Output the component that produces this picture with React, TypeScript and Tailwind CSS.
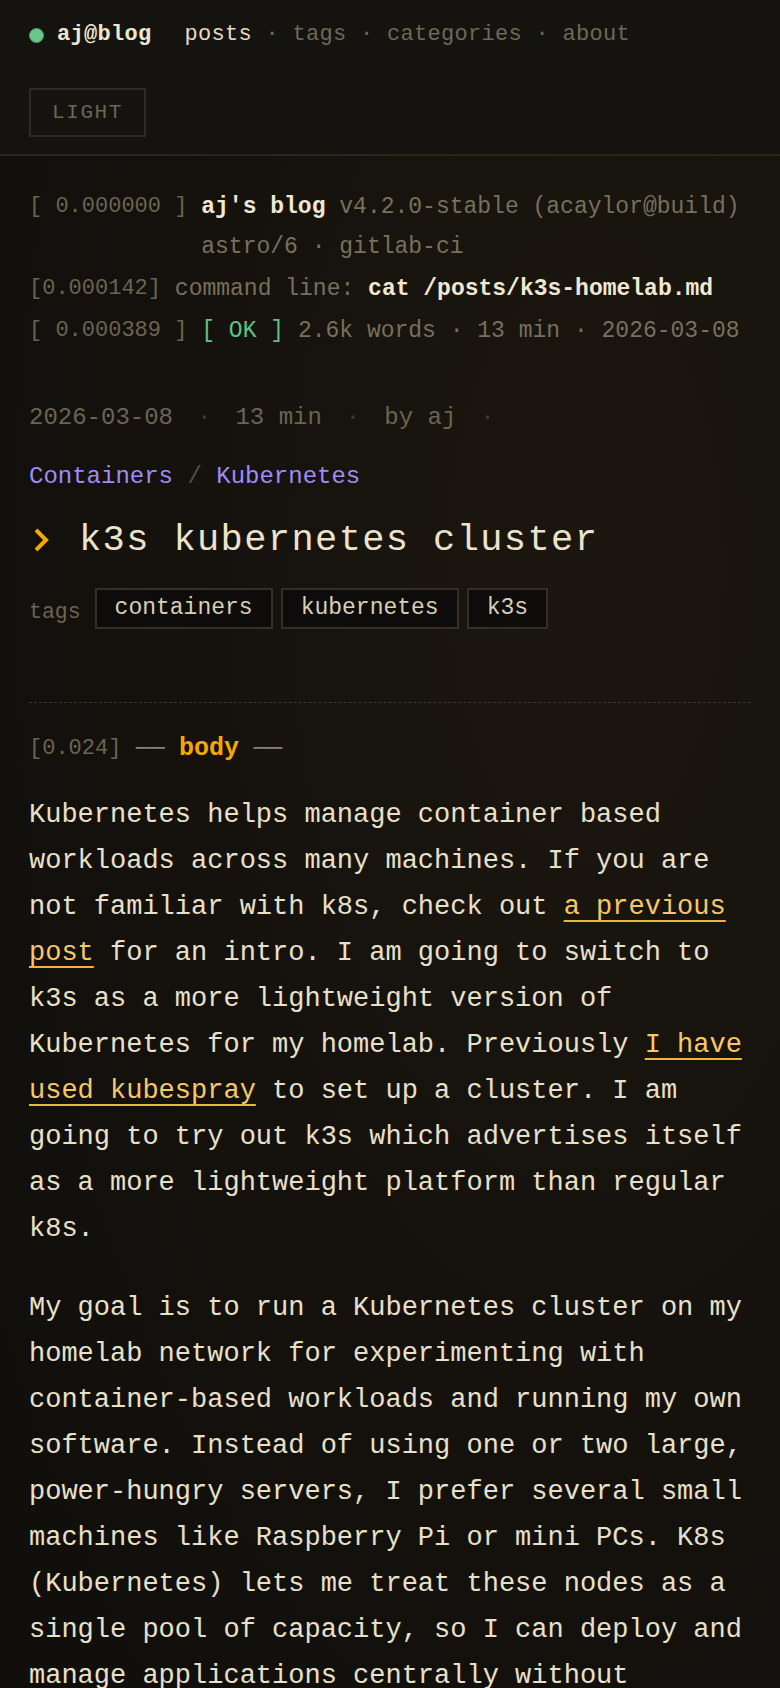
import React from "react";

const mono = "font-['Liberation_Mono','DejaVu_Sans_Mono',monospace]";

function Nav() {
  return (
    <header className="bg-[#141310] border-b-2 border-[#29261f] px-[29px] pt-[17px] pb-[17px]">
      <div className="flex items-center h-[36px] text-[22px] leading-[36px] tracking-[0.3px] whitespace-pre">
        <span className="shrink-0 block w-[15px] h-[15px] rounded-full bg-[#6ac78a] border-[1.5px] border-[#4a9e68]" />
        <span className="ml-[13px] font-bold text-[#efe6cf]">aj@blog</span>
        <span className="ml-[33px] text-[#e4dbc4]">posts</span>
        <span className="text-[#6f6854]"> · tags · categories · about</span>
      </div>
      <button className="mt-[35px] h-[49px] w-[117px] flex items-center justify-center border-2 border-[#2f2b24] text-[21px] tracking-[1.6px] text-[#6c6552]">
        LIGHT
      </button>
    </header>
  );
}

function Ts({ children }: { children: React.ReactNode }) {
  return <span className="text-[22px] text-[#6b6451] whitespace-pre">{children}</span>;
}

function BootLog() {
  return (
    <div className="pt-[31px] text-[23px] leading-[40px] text-[#77705c]">
      <div className="flex whitespace-pre">
        <Ts>[ 0.000000 ]</Ts>
        <span> </span>
        <div>
          <div>
            <span className="font-bold text-[#f1e8d2]">aj's blog</span> v4.2.0-stable (acaylor@build)
          </div>
          <div>astro/6 · gitlab-ci</div>
        </div>
      </div>
      <div className="mt-[2px] flex whitespace-pre">
        <Ts>[0.000142]</Ts>
        <span> command line: </span>
        <span className="font-bold text-[#f1e8d2]">cat /posts/k3s-homelab.md</span>
      </div>
      <div className="mt-[2px] flex whitespace-pre">
        <Ts>[ 0.000389 ]</Ts>
        <span> </span>
        <span className="text-[#5ec286]">[ OK ]</span>
        <span> 2.6k words · 13 min · 2026-03-08</span>
      </div>
    </div>
  );
}

function Meta() {
  return (
    <div className="mt-[49px] flex items-center gap-[24px] text-[24px] leading-[36px] text-[#6b6452]">
      <span>2026-03-08</span>
      <span className="text-[#3e392f]">·</span>
      <span>13 min</span>
      <span className="text-[#3e392f]">·</span>
      <span>by aj</span>
      <span className="text-[#3e392f]">·</span>
    </div>
  );
}

function Chevron() {
  return (
    <svg width="18" height="26" viewBox="0 0 18 26" className="shrink-0">
      <path d="M4 3 L14 13 L4 23" fill="none" stroke="#f5a800" strokeWidth="4" strokeLinecap="butt" strokeLinejoin="miter" />
    </svg>
  );
}

function Tag({ children }: { children: React.ReactNode }) {
  return (
    <span className="h-[41px] flex items-center px-[18px] border-2 border-[#332f27] bg-[#0d0c0a] text-[23px] text-[#d9cfb3]">
      {children}
    </span>
  );
}

function Link({ children }: { children: React.ReactNode }) {
  return (
    <a className="text-[#f7c865] underline decoration-[#efb43e] decoration-2 underline-offset-[6px]">{children}</a>
  );
}

export default function App() {
  return (
    <div className={`${mono} min-h-[1688px] bg-[#110f0c]`}>
      <Nav />
      <main className="px-[29px] pb-[60px] bg-[radial-gradient(ellipse_at_75%_25%,#1b160f_0%,#15120d_45%,#0f0e0b_100%)]">
        <BootLog />
        <Meta />
        <div className="mt-[23px] text-[24px] leading-[36px] whitespace-pre">
          <span className="text-[#9e8cf7]">Containers</span>
          <span className="text-[#544e42]"> / </span>
          <span className="text-[#9e8cf7]">Kubernetes</span>
        </div>
        <h1 className="mt-[19px] flex items-center h-[52px]">
          <span className="ml-[3px]"><Chevron /></span>
          <span className="ml-[29px] text-[37px] leading-[52px] tracking-[1.4px] font-normal text-[#ede3cb]">k3s kubernetes cluster</span>
        </h1>
        <div className="mt-[22px] flex items-center">
          <span className="text-[21.5px] text-[#6b6452] pt-[8px] mr-[14px]">tags</span>
          <div className="flex gap-[8px]">
            <Tag>containers</Tag>
            <Tag>kubernetes</Tag>
            <Tag>k3s</Tag>
          </div>
        </div>
        <div className="mt-[73px] border-t border-dashed border-[#3b362d]" />
        <div className="mt-[28px] flex items-center leading-[36px] whitespace-pre">
          <span className="text-[22px] text-[#6b6451]">[0.024]</span>
          <span className="text-[24px] text-[#8a8370]"> ── </span>
          <span className="text-[25px] font-bold text-[#f5a800]">body</span>
          <span className="text-[24px] text-[#8a8370]"> ──</span>
        </div>
        <div className="mt-[25px] text-[27px] leading-[46px] text-[#e9e0c9]">
          <p className="mb-[33px]">
            Kubernetes helps manage container based workloads across many machines. If you are not familiar with k8s, check out <Link>a previous post</Link> for an intro. I am going to switch to k3s as a more lightweight version of Kubernetes for my homelab. Previously <Link>I have used kubespray</Link> to set up a cluster. I am going to try out k3s which advertises itself as a more lightweight platform than regular k8s.
          </p>
          <p>
            My goal is to run a Kubernetes cluster on my homelab network for experimenting with container-based workloads and running my own software. Instead of using one or two large, power-hungry servers, I prefer several small machines like Raspberry Pi or mini PCs. K8s (Kubernetes) lets me treat these nodes as a single pool of capacity, so I can deploy and manage applications centrally without worrying about which machine runs what.
          </p>
        </div>
      </main>
    </div>
  );
}
